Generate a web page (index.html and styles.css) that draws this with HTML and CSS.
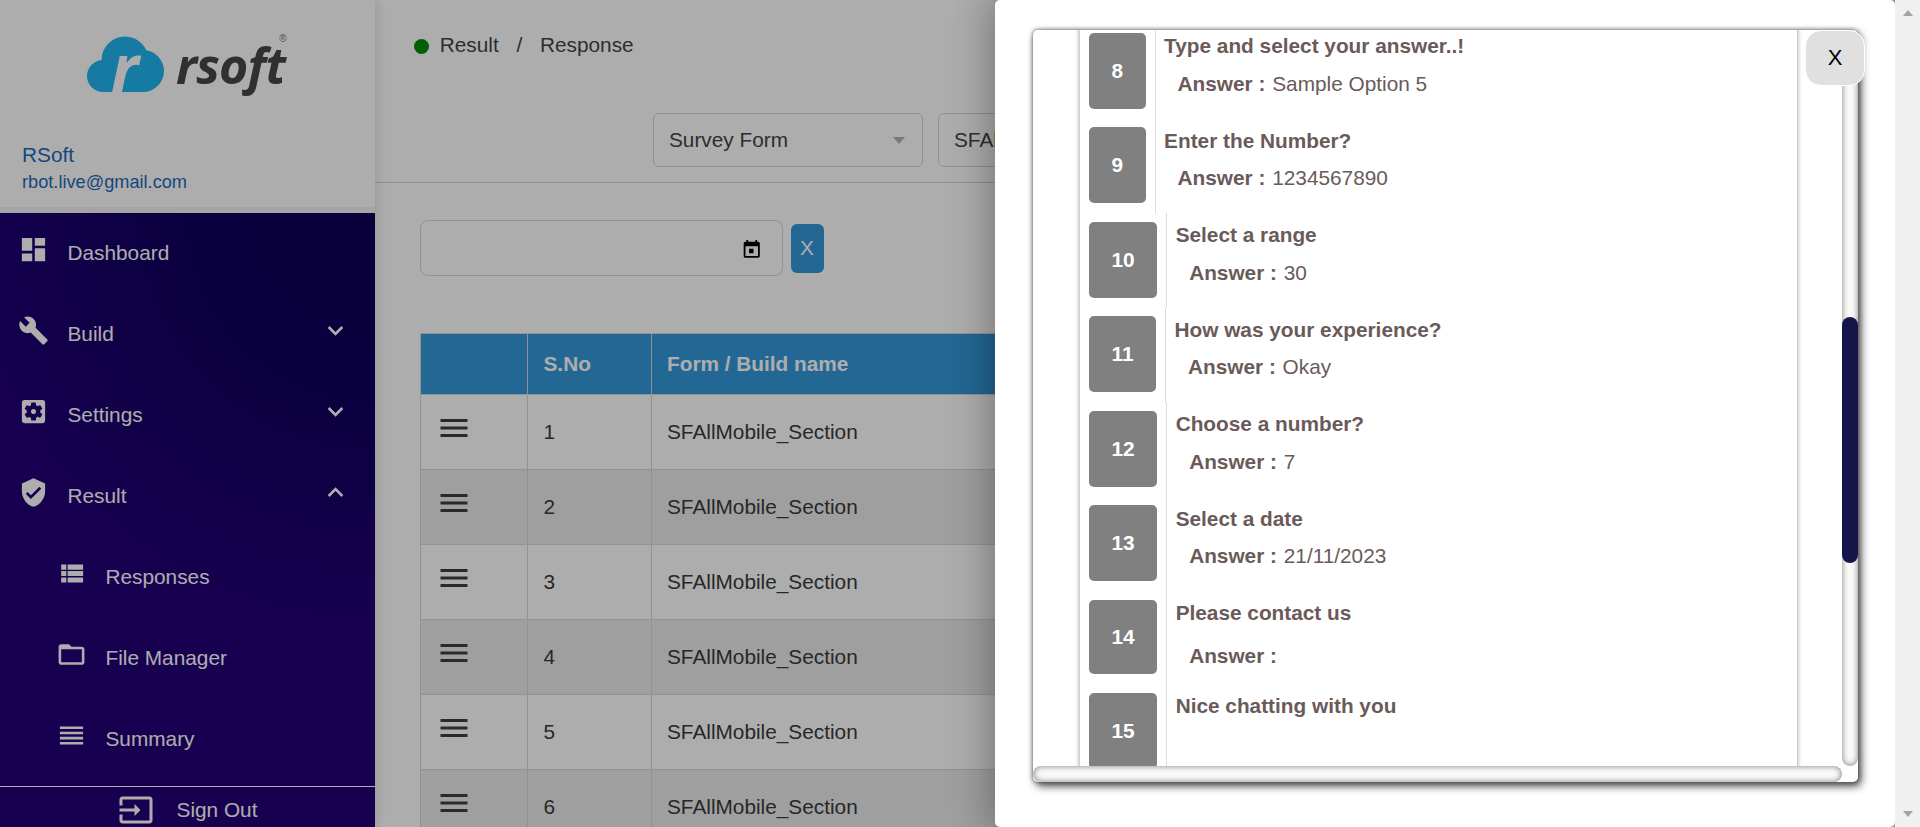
FILE: index.html
```html
<!DOCTYPE html>
<html lang="en">
<head>
    <meta charset="UTF-8">
    <meta name="viewport" content="width=device-width, initial-scale=1.0">
    <title>RSoft - Response</title>
    <link rel="stylesheet" href="styles.css">
</head>
<body>
    <div class="window">
        <div class="page">
            <aside class="sidebar">
                <div class="profile">
                    <div class="brand">
                        <svg class="brand-cloud" width="78" height="100" viewBox="0 -20 78 100">
                            <circle cx="16" cy="40" r="16"/>
                            <circle cx="38" cy="24" r="23.5"/>
                            <circle cx="56" cy="35" r="21"/>
                            <rect x="16" y="34" width="40" height="22"/>
                            <text class="brand-r" x="24" y="56">r</text>
                        </svg>
                        <span class="brand-name">rsoft</span>
                        <span class="brand-mark">®</span>
                    </div>
                    <div class="profile-name">RSoft</div>
                    <div class="profile-mail">rbot.live@gmail.com</div>
                </div>
                <nav class="menu">
                    <ul class="menu-list">
                        <li class="menu-item">
                            <svg class="menu-icon" viewBox="0 0 24 24"><path d="M3 13h8V3H3v10zm0 8h8v-6H3v6zm10 0h8V11h-8v10zm0-18v6h8V3h-8z"/></svg>
                            <span class="menu-label">Dashboard</span>
                        </li>
                        <li class="menu-item">
                            <svg class="menu-icon" viewBox="0 0 24 24"><path d="M22.7 19l-9.1-9.1c.9-2.3.4-5-1.5-6.9-2-2-5-2.4-7.4-1.3L9 6 6 9 1.6 4.7C.4 7.1.9 10.1 2.9 12.1c1.9 1.9 4.6 2.4 6.9 1.5l9.1 9.1c.4.4 1 .4 1.4 0l2.3-2.3c.5-.4.5-1.1.1-1.4z"/></svg>
                            <span class="menu-label">Build</span>
                            <svg class="menu-chevron" viewBox="0 0 24 24"><path d="M16.59 8.59L12 13.17 7.41 8.59 6 10l6 6 6-6z"/></svg>
                        </li>
                        <li class="menu-item">
                            <svg class="menu-icon" viewBox="0 0 24 24"><path d="M12 10c-1.1 0-2 .9-2 2s.9 2 2 2 2-.9 2-2-.9-2-2-2zm7-7H5c-1.11 0-2 .9-2 2v14c0 1.1.89 2 2 2h14c1.11 0 2-.9 2-2V5c0-1.1-.89-2-2-2zm-1.75 9c0 .23-.02.46-.05.68l1.48 1.16c.13.11.17.3.08.45l-1.4 2.42c-.09.15-.27.21-.43.15l-1.74-.7c-.36.28-.76.51-1.18.69l-.26 1.85c-.03.17-.18.3-.35.3h-2.8c-.17 0-.32-.13-.35-.29l-.26-1.85c-.43-.18-.82-.41-1.18-.69l-1.74.7c-.16.06-.34 0-.43-.15l-1.4-2.42c-.09-.15-.05-.34.08-.45l1.48-1.16c-.03-.23-.05-.46-.05-.69 0-.23.02-.46.05-.68l-1.48-1.16c-.13-.11-.17-.3-.08-.45l1.4-2.42c.09-.15.27-.21.43-.15l1.74.7c.36-.28.76-.51 1.18-.69l.26-1.85c.03-.17.18-.3.35-.3h2.8c.17 0 .32.13.35.29l.26 1.85c.43.18.82.41 1.18.69l1.74-.7c.16-.06.34 0 .43.15l1.4 2.42c.09.15.05.34-.08.45l-1.48 1.16c.03.23.05.46.05.69z"/></svg>
                            <span class="menu-label">Settings</span>
                            <svg class="menu-chevron" viewBox="0 0 24 24"><path d="M16.59 8.59L12 13.17 7.41 8.59 6 10l6 6 6-6z"/></svg>
                        </li>
                        <li class="menu-item">
                            <svg class="menu-icon" viewBox="0 0 24 24"><path d="M12 1L3 5v6c0 5.55 3.84 10.74 9 12 5.16-1.26 9-6.45 9-12V5l-9-4zm-2 16l-4-4 1.41-1.41L10 14.17l6.59-6.59L18 9l-8 8z"/></svg>
                            <span class="menu-label">Result</span>
                            <svg class="menu-chevron" viewBox="0 0 24 24"><path d="M12 8l-6 6 1.41 1.41L12 10.83l4.59 4.58L18 14z"/></svg>
                        </li>
                        <li class="menu-item menu-sub">
                            <svg class="menu-icon" viewBox="0 0 24 24"><path d="M4 14h4v-4H4v4zm0 5h4v-4H4v4zM4 9h4V5H4v4zm5 5h12v-4H9v4zm0 5h12v-4H9v4zM9 5v4h12V5H9z"/></svg>
                            <span class="menu-label">Responses</span>
                        </li>
                        <li class="menu-item menu-sub">
                            <svg class="menu-icon" viewBox="0 0 24 24"><path d="M20 6h-8l-2-2H4c-1.1 0-1.99.9-1.99 2L2 18c0 1.1.9 2 2 2h16c1.1 0 2-.9 2-2V8c0-1.1-.9-2-2-2zm0 12H4V8h16v10z"/></svg>
                            <span class="menu-label">File Manager</span>
                        </li>
                        <li class="menu-item menu-sub">
                            <svg class="menu-icon" viewBox="0 0 24 24"><path d="M3 15h18v-2H3v2zm0 4h18v-2H3v2zm0-8h18V9H3v2zm0-6v2h18V5H3z"/></svg>
                            <span class="menu-label">Summary</span>
                        </li>
                    </ul>
                    <div class="signout">
                        <svg class="signout-icon" viewBox="0 0 24 24"><path d="M21 3.01H3c-1.1 0-2 .9-2 2V9h2V4.99h18v14.03H3V15H1v4.01c0 1.1.9 1.98 2 1.98h18c1.1 0 2-.88 2-1.98v-14c0-1.11-.9-2-2-2zM11 16l4-4-4-4v3H1v2h10v3z"/></svg>
                        <span>Sign Out</span>
                    </div>
                </nav>
            </aside>

            <main class="content">
                <header class="topbar">
                    <div class="crumbs">
                        <span class="crumb-dot"></span>
                        <span>Result</span>
                        <span>/</span>
                        <span>Response</span>
                    </div>
                    <div class="filters">
                        <div class="select">
                            <span>Survey Form</span>
                            <span class="select-arrow"></span>
                        </div>
                        <div class="select">
                            <span>SFAllMobile_Section</span>
                            <span class="select-arrow"></span>
                        </div>
                    </div>
                </header>

                <section class="results">
                    <div class="date-row">
                        <div class="date-input">
                            <svg class="date-icon" viewBox="0 0 24 24"><path d="M19 3h-1V1h-2v2H8V1H6v2H5c-1.1 0-2 .9-2 2v14c0 1.1.9 2 2 2h14c1.1 0 2-.9 2-2V5c0-1.1-.9-2-2-2zm0 16H5V8h14v11zM9 11h5v5H9z"/></svg>
                        </div>
                        <button class="date-clear">X</button>
                    </div>
                    <table class="result-table">
                        <thead>
                            <tr>
                                <th class="col-menu"></th>
                                <th class="col-no">S.No</th>
                                <th>Form / Build name</th>
                            </tr>
                        </thead>
                        <tbody>
                            <tr>
                                <td><svg class="row-menu" viewBox="0 0 24 24"><path d="M3 18h18v-2H3v2zm0-5h18v-2H3v2zm0-7v2h18V6H3z"/></svg></td>
                                <td>1</td>
                                <td>SFAllMobile_Section</td>
                            </tr>
                            <tr>
                                <td><svg class="row-menu" viewBox="0 0 24 24"><path d="M3 18h18v-2H3v2zm0-5h18v-2H3v2zm0-7v2h18V6H3z"/></svg></td>
                                <td>2</td>
                                <td>SFAllMobile_Section</td>
                            </tr>
                            <tr>
                                <td><svg class="row-menu" viewBox="0 0 24 24"><path d="M3 18h18v-2H3v2zm0-5h18v-2H3v2zm0-7v2h18V6H3z"/></svg></td>
                                <td>3</td>
                                <td>SFAllMobile_Section</td>
                            </tr>
                            <tr>
                                <td><svg class="row-menu" viewBox="0 0 24 24"><path d="M3 18h18v-2H3v2zm0-5h18v-2H3v2zm0-7v2h18V6H3z"/></svg></td>
                                <td>4</td>
                                <td>SFAllMobile_Section</td>
                            </tr>
                            <tr>
                                <td><svg class="row-menu" viewBox="0 0 24 24"><path d="M3 18h18v-2H3v2zm0-5h18v-2H3v2zm0-7v2h18V6H3z"/></svg></td>
                                <td>5</td>
                                <td>SFAllMobile_Section</td>
                            </tr>
                            <tr>
                                <td><svg class="row-menu" viewBox="0 0 24 24"><path d="M3 18h18v-2H3v2zm0-5h18v-2H3v2zm0-7v2h18V6H3z"/></svg></td>
                                <td>6</td>
                                <td>SFAllMobile_Section</td>
                            </tr>
                        </tbody>
                    </table>
                </section>
            </main>

            <div class="backdrop"></div>

            <div class="panel">
                <div class="dialog">
                    <div class="pane">
                        <div class="qa-list">
                            <div class="qa-row">
                                <div class="qa-cell"><div class="qa-num">8</div></div>
                                <div class="qa-body">
                                    <div class="qa-question">Type and select your answer..!</div>
                                    <div class="qa-answer"><b>Answer :</b> Sample Option 5</div>
                                </div>
                            </div>
                            <div class="qa-row">
                                <div class="qa-cell"><div class="qa-num">9</div></div>
                                <div class="qa-body">
                                    <div class="qa-question">Enter the Number?</div>
                                    <div class="qa-answer"><b>Answer :</b> 1234567890</div>
                                </div>
                            </div>
                            <div class="qa-row">
                                <div class="qa-cell"><div class="qa-num">10</div></div>
                                <div class="qa-body">
                                    <div class="qa-question">Select a range</div>
                                    <div class="qa-answer"><b>Answer :</b> 30</div>
                                </div>
                            </div>
                            <div class="qa-row">
                                <div class="qa-cell"><div class="qa-num">11</div></div>
                                <div class="qa-body">
                                    <div class="qa-question">How was your experience?</div>
                                    <div class="qa-answer"><b>Answer :</b> Okay</div>
                                </div>
                            </div>
                            <div class="qa-row">
                                <div class="qa-cell"><div class="qa-num">12</div></div>
                                <div class="qa-body">
                                    <div class="qa-question">Choose a number?</div>
                                    <div class="qa-answer"><b>Answer :</b> 7</div>
                                </div>
                            </div>
                            <div class="qa-row">
                                <div class="qa-cell"><div class="qa-num">13</div></div>
                                <div class="qa-body">
                                    <div class="qa-question">Select a date</div>
                                    <div class="qa-answer"><b>Answer :</b> 21/11/2023</div>
                                </div>
                            </div>
                            <div class="qa-row qa-row-empty">
                                <div class="qa-cell"><div class="qa-num">14</div></div>
                                <div class="qa-body">
                                    <div class="qa-question">Please contact us</div>
                                    <div class="qa-answer"><b>Answer :</b></div>
                                </div>
                            </div>
                            <div class="qa-row">
                                <div class="qa-cell"><div class="qa-num">15</div></div>
                                <div class="qa-body">
                                    <div class="qa-question">Nice chatting with you</div>
                                </div>
                            </div>
                        </div>
                    </div>
                    <div class="vbar"><div class="vbar-thumb"></div></div>
                    <div class="hbar"></div>
                </div>
                <button class="panel-close">X</button>
            </div>
        </div>

        <div class="win-scroll">
            <span class="win-arrow-up"></span>
            <span class="win-arrow-down"></span>
        </div>
    </div>
</body>
</html>
```

FILE: styles.css
```css
html, body {
    margin: 0;
    height: 100%;
    overflow: hidden;
}
body {
    font-family: "Liberation Sans", Arial, sans-serif;
    font-size: 20.8px;
    line-height: 24px;
    color: #444;
    background: #fff;
}
.window {
    display: flex;
    height: 827px;
}
.page {
    flex: 1;
    display: flex;
    position: relative;
    overflow: hidden;
}

/* sidebar */
.sidebar {
    width: 375px;
    flex-shrink: 0;
    display: flex;
    flex-direction: column;
    box-shadow: 2px 0 10px rgba(0, 0, 0, 0.12);
    z-index: 1;
}
.profile {
    height: 213px;
    box-sizing: border-box;
    padding: 36px 0 0 22px;
    border-bottom: 6px solid #f3f3f3;
    color: #1d6ab8;
}
.brand {
    display: flex;
    align-items: flex-start;
    height: 96px;
    margin-left: 65px;
}
.brand-cloud {
    fill: #1fb5f0;
    flex-shrink: 0;
    margin-top: -20px;
}
.brand-r {
    font-family: "Open Sans", sans-serif;
    font-weight: 700;
    font-style: italic;
    font-size: 66px;
    fill: #fff;
}
.brand-name {
    font-family: "Open Sans", sans-serif;
    font-weight: 700;
    font-style: italic;
    font-size: 50px;
    line-height: 44px;
    letter-spacing: -0.8px;
    color: #484848;
    margin: 7px 0 0 11px;
}
.brand-mark {
    font-size: 10px;
    line-height: 6px;
    color: #777;
    margin: 0 0 0 -6px;
}
.profile-name {
    margin-top: 11px;
}
.profile-mail {
    font-size: 18.2px;
    margin-top: 3px;
}

.menu {
    flex: 1;
    display: flex;
    flex-direction: column;
    color: #fff;
    background: radial-gradient(ellipse 420px 420px at 100% 0, #0e0059 0%, #10005e 45%, #220076 100%);
    background-color: #220076;
}
.menu-list {
    list-style: none;
    margin: -1px 0 0 0;
    padding: 0;
    flex: 1;
}
.menu-item {
    display: flex;
    align-items: center;
    height: 81px;
    padding: 0 24px 0 18px;
}
.menu-icon {
    width: 31px;
    height: 31px;
    fill: #fff;
    flex-shrink: 0;
    margin: 0 18.5px 6px 0;
}
.menu-label {
    flex: 1;
}
.menu-chevron {
    width: 31px;
    height: 31px;
    fill: #fff;
    margin-bottom: 7px;
}
.menu-sub {
    padding-left: 56px;
}
.signout {
    display: flex;
    align-items: center;
    justify-content: center;
    gap: 23px;
    height: 41px;
    box-sizing: border-box;
    padding-top: 5px;
    border-top: 1px solid #fff;
}
.signout-icon {
    width: 36px;
    height: 36px;
    fill: #fff;
}

/* main content */
.content {
    flex-shrink: 0;
    width: 1500px;
}
.topbar {
    height: 183px;
    box-sizing: border-box;
    padding: 32px 0 0 39px;
    border-bottom: 1px solid #d4d4d4;
    color: #444;
}
.crumbs {
    display: flex;
    align-items: center;
    gap: 17.75px;
    height: 26px;
}
.crumb-dot {
    width: 15px;
    height: 15px;
    border-radius: 50%;
    background: #008c00;
    margin-right: -7px;
    margin-top: 2px;
}
.filters {
    display: flex;
    gap: 15px;
    margin: 55px 0 0 239px;
}
.select {
    width: 270px;
    height: 54px;
    box-sizing: border-box;
    display: flex;
    align-items: center;
    justify-content: space-between;
    padding: 0 17px 0 15px;
    border: 1px solid #d6d6d6;
    border-radius: 6px;
}
.select-arrow {
    width: 0;
    height: 0;
    border-left: 6.5px solid transparent;
    border-right: 6.5px solid transparent;
    border-top: 7px solid #b3b3b3;
}
.results {
    padding: 37px 0 0 44.5px;
}
.date-row {
    display: flex;
    align-items: center;
    gap: 8px;
}
.date-input {
    width: 363px;
    height: 56px;
    box-sizing: border-box;
    display: flex;
    align-items: center;
    justify-content: flex-end;
    padding: 4px 19px 0 0;
    border: 1px solid #d6d6d6;
    border-radius: 8px;
}
.date-icon {
    width: 21.5px;
    height: 21.5px;
    fill: #000;
}
.date-clear {
    width: 33px;
    height: 49px;
    padding: 0;
    border: none;
    border-radius: 6px;
    background-color: #3498db;
    color: #fff;
    font: inherit;
}
.result-table {
    width: 1440px;
    margin-top: 57px;
    border-collapse: collapse;
    table-layout: fixed;
    color: #3a3a3a;
}
.result-table th, .result-table td {
    border: 1px solid #d8d8d8;
    padding: 0 0 0 15.5px;
    text-align: left;
}
.result-table th {
    height: 60px;
    background-color: #3498db;
    color: #fff;
    font-weight: 700;
}
.result-table td {
    height: 74px;
}
.result-table tbody tr:nth-child(even) td {
    background-color: #ebebeb;
}
.col-menu {
    width: 91px;
}
.col-no {
    width: 107px;
}
.row-menu {
    display: block;
    width: 36px;
    height: 36px;
    margin: -8px 0 0 0;
    fill: #3e3e3e;
}

/* modal */
.backdrop {
    position: absolute;
    inset: 0;
    background: rgba(0, 0, 0, 0.32);
    z-index: 2;
}
.panel {
    position: absolute;
    top: 0;
    right: 0;
    bottom: 0;
    width: 900px;
    box-sizing: border-box;
    padding: 30px 37px 45px 38px;
    display: flex;
    background: #fff;
    border-radius: 5px;
    box-shadow: 0 0 40px 5px rgba(0, 0, 0, 0.32);
    z-index: 3;
}
.dialog {
    flex: 1;
    display: grid;
    grid-template-columns: 1fr 16px;
    grid-template-rows: 1fr 16px;
    border-radius: 5px;
    background: #fff;
    box-shadow: 0 0 4px #555, 3px 4px 8px #444;
}
.pane {
    overflow: hidden;
    padding: 0 45px 0 47px;
}
.qa-list {
    margin-top: -6.5px;
    height: 800px;
    color: #6a5a5a;
    box-shadow: 0 0 5px rgba(0, 0, 0, 0.45);
}
.qa-row {
    display: flex;
    height: 94.5px;
}
.qa-row-empty {
    height: 92.75px;
}
.qa-cell {
    box-sizing: border-box;
    padding: 9.25px 9px;
    border-right: 1px solid #dcdcdc;
    display: flex;
    flex-shrink: 0;
}
.qa-num {
    display: flex;
    align-items: center;
    justify-content: center;
    box-sizing: border-box;
    padding: 0 22.5px;
    border-radius: 5px;
    background: #808080;
    color: #fff;
    font-weight: 700;
}
.qa-body {
    padding: 10.5px 0 0 8.5px;
}
.qa-question {
    font-weight: 700;
}
.qa-answer {
    margin: 13.5px 0 0 13.5px;
}
.qa-answer b {
    margin-right: 1px;
}
.qa-row-empty .qa-answer {
    margin-top: 18.5px;
}
.vbar {
    border-radius: 8px;
    background: #fafafa;
    box-shadow: inset 0 0 6px rgba(0, 0, 0, 0.5);
}
.vbar-thumb {
    height: 246px;
    margin-top: 287px;
    border-radius: 8px;
    background: #15154a;
}
.hbar {
    border-radius: 8px;
    background: #fafafa;
    box-shadow: inset 0 0 6px rgba(0, 0, 0, 0.5);
}
.panel-close {
    position: absolute;
    top: 30px;
    right: 30px;
    width: 60px;
    height: 56px;
    padding: 0;
    border: 1px solid #fff;
    border-radius: 16px;
    background: #e0e0e0;
    color: #000;
    font: inherit;
    font-size: 22px;
}

/* browser scrollbar on the right */
.win-scroll {
    width: 25px;
    flex-shrink: 0;
    background: #f0f0f0;
    display: flex;
    flex-direction: column;
    justify-content: space-between;
    align-items: center;
    padding: 10px 0;
    box-sizing: border-box;
    z-index: 4;
}
.win-arrow-up, .win-arrow-down {
    width: 0;
    height: 0;
    border-left: 5.5px solid transparent;
    border-right: 5.5px solid transparent;
}
.win-arrow-up {
    border-bottom: 6px solid #a3a3a3;
}
.win-arrow-down {
    border-top: 6px solid #a3a3a3;
}
```
